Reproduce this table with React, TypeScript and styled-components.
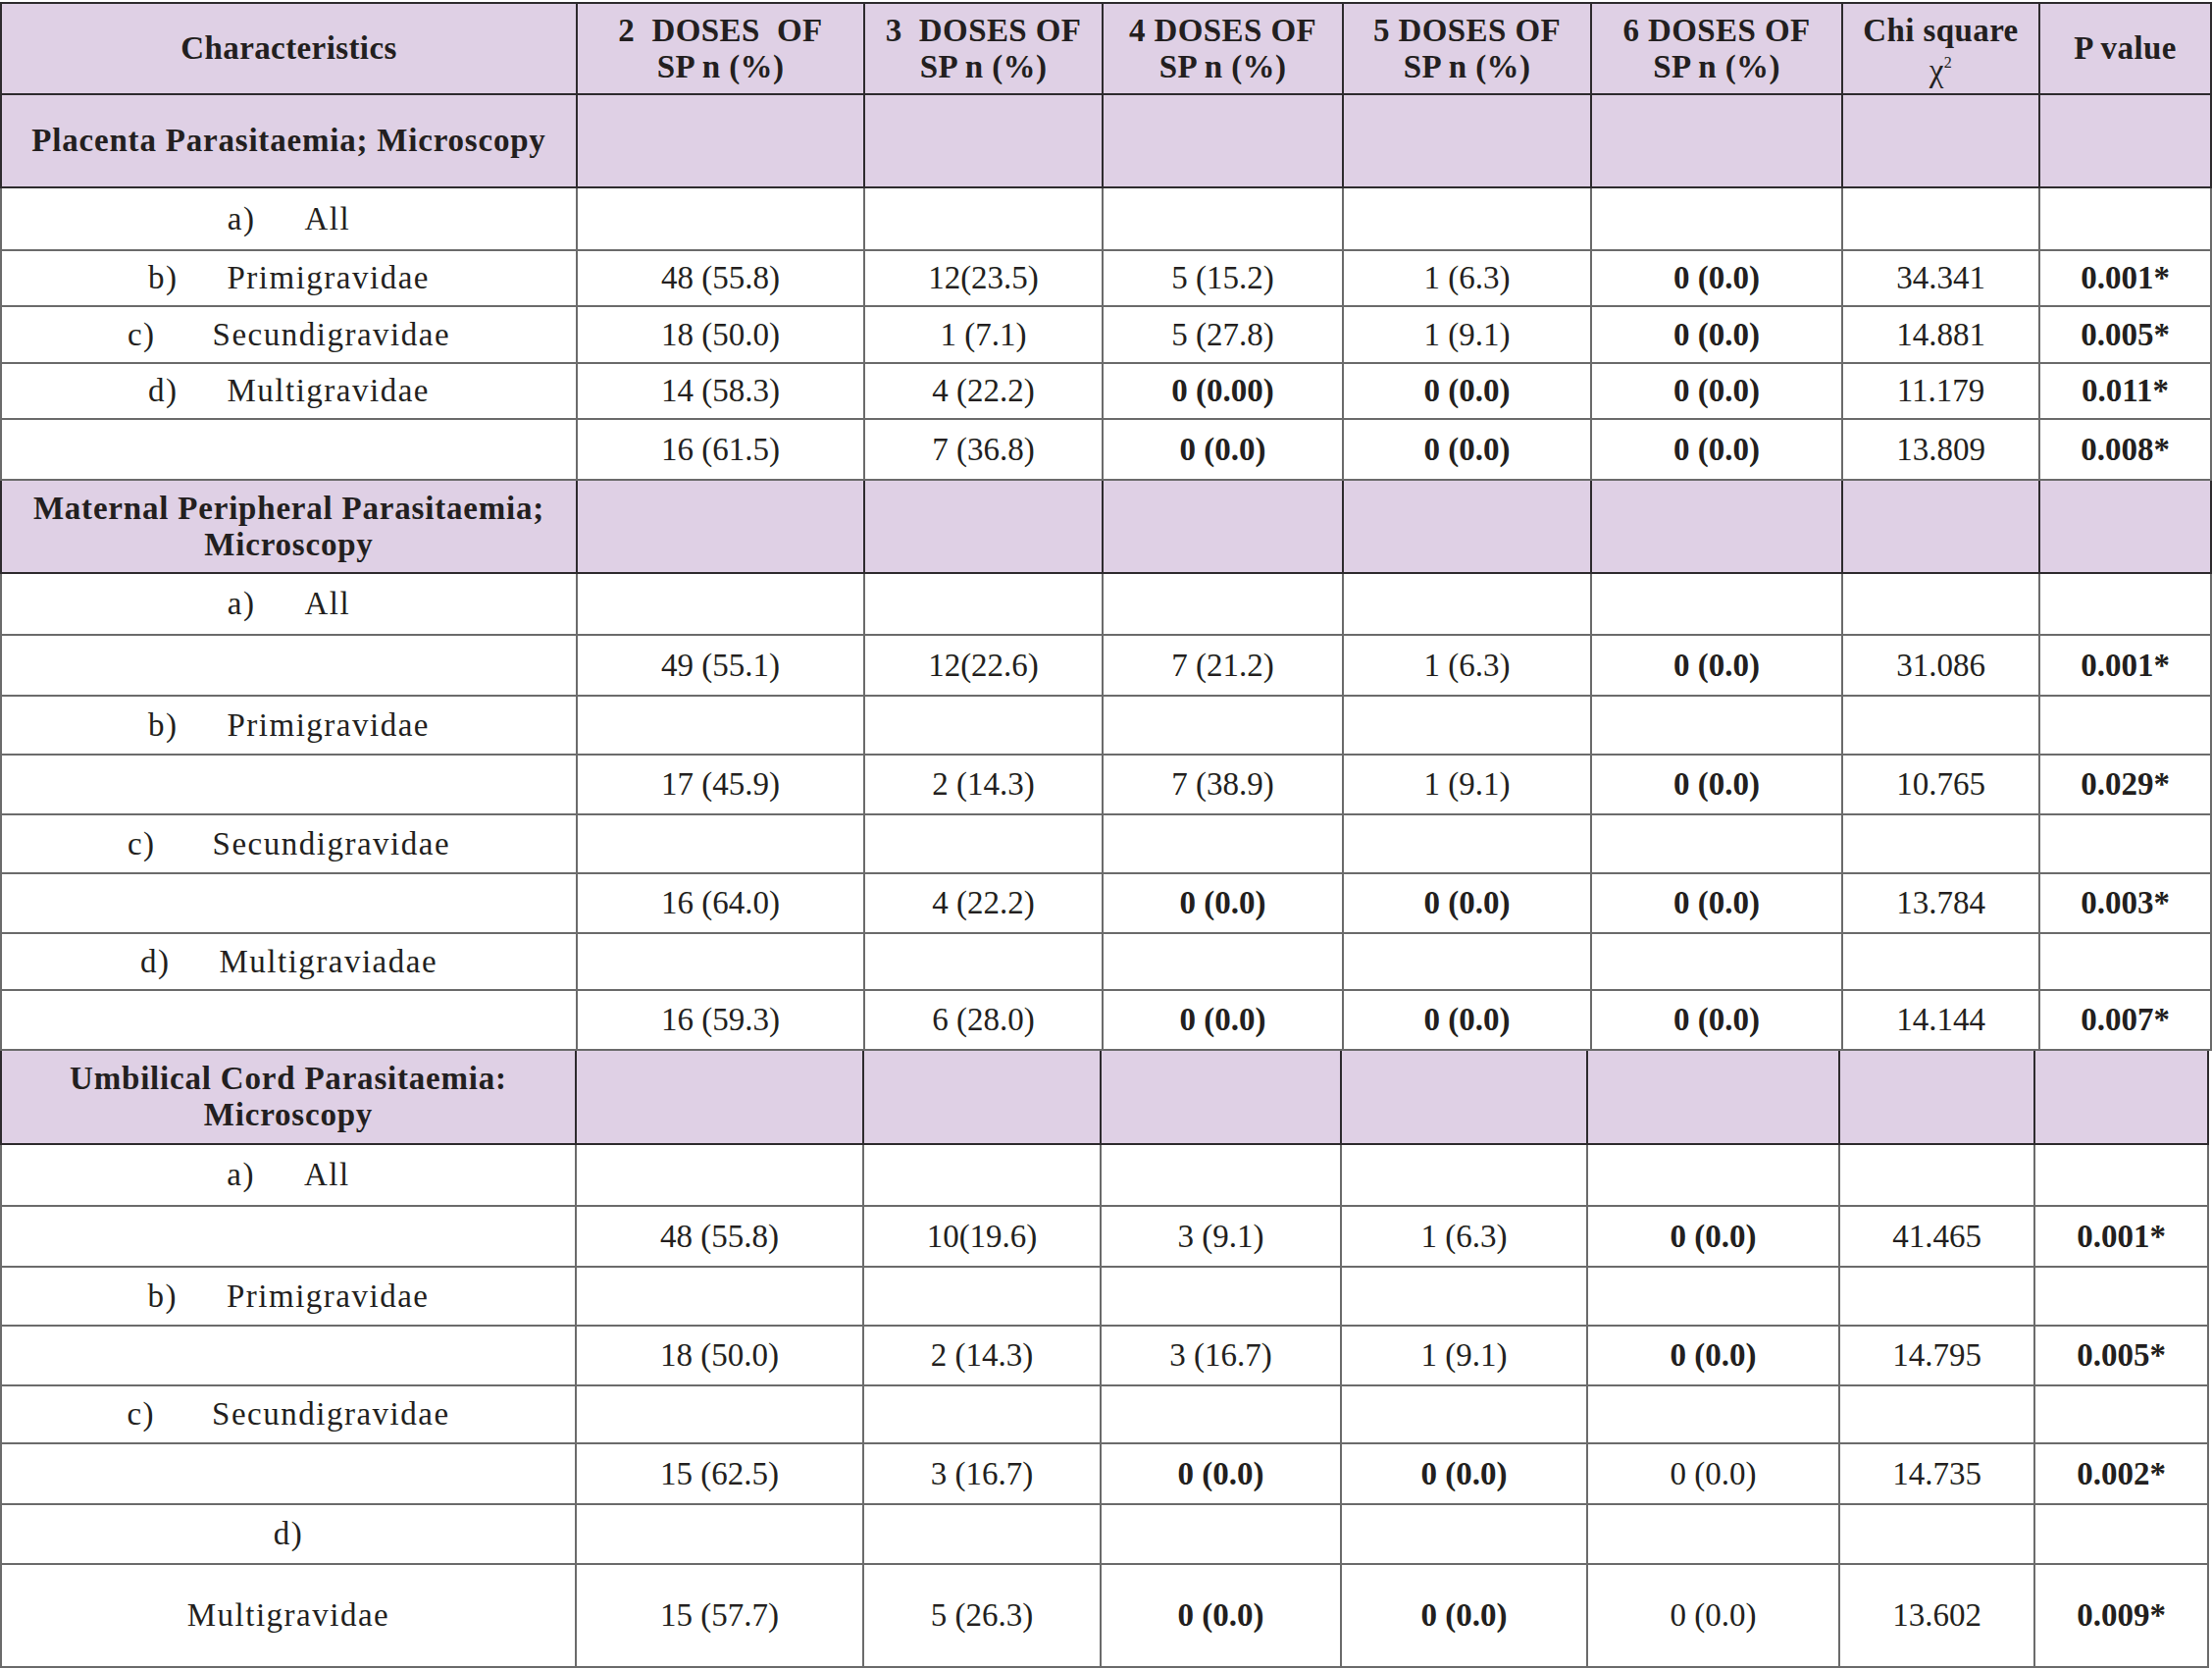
import * as React from 'react';
import styled, { createGlobalStyle, css } from 'styled-components';

const INK = '#231f20';
const LAVENDER = '#dfd0e5';

const GlobalStyle = createGlobalStyle`
  html, body {
    margin: 0;
    padding: 0;
    background: #ffffff;
  }

  body {
    font-family: 'Liberation Serif', 'Times New Roman', serif;
    color: ${INK};
  }
`;

const Page = styled.div`
  display: flex;
  flex-direction: column;
  padding-top: 2px;
  width: 2255px;
`;

const Table = styled.table<{ $first?: boolean }>`
  border-collapse: collapse;
  table-layout: fixed;
  font-size: 33px;
  line-height: 1.12;

  ${props =>
    !props.$first &&
    css`
      tr:first-child td {
        border-top: none;
      }
    `}
`;

const Row = styled.tr<{ $shade?: boolean }>`
  background: ${props => (props.$shade ? LAVENDER : '#ffffff')};
`;

const Cell = styled.td<{ $bold?: boolean; $dark?: boolean; $spacing?: number }>`
  border: 2px solid ${props => (props.$dark ? '#2e2b2e' : '#6b6b6b')};
  padding: 0 6px;
  text-align: center;
  vertical-align: middle;
  font-weight: ${props => (props.$bold ? 700 : 400)};
  letter-spacing: ${props => props.$spacing ?? 0}px;
  white-space: pre;
`;

const Marker = styled.span<{ $gap: number }>`
  display: inline-block;
  margin-right: ${props => props.$gap}px;
`;

const Sup = styled.sup`
  font-size: 16px;
  vertical-align: 14px;
  line-height: 0;
`;

const Chi = styled.span`
  display: inline-block;
  font-weight: 400;
  transform: translateY(4px);
`;

type Value = string | { b: string };

type Line =
  | { kind: 'section'; title: React.ReactNode; h: number }
  | { kind: 'row'; marker?: string; gap?: number; label?: string; values?: Value[]; h: number };

const B = (b: string) => ({ b });

const firstWidths = [587, 293, 243, 245, 253, 256, 201, 175];
const secondWidths = [586, 293, 242, 245, 251, 257, 199, 177];

const heads: React.ReactNode[] = [
  'Characteristics',
  '2  DOSES  OF\nSP n (%)',
  '3  DOSES OF\nSP n (%)',
  '4 DOSES OF\nSP n (%)',
  '5 DOSES OF\nSP n (%)',
  '6 DOSES OF\nSP n (%)',
  <>
    Chi square
    {'\n'}
    <Chi>
      χ<Sup>2</Sup>
    </Chi>
  </>,
  'P value',
];

const firstLines: Line[] = [
  { kind: 'section', title: 'Placenta Parasitaemia; Microscopy', h: 95 },
  { kind: 'row', marker: 'a)', label: 'All', h: 64 },
  {
    kind: 'row',
    marker: 'b)',
    label: 'Primigravidae',
    values: ['48 (55.8)', '12(23.5)', '5 (15.2)', '1 (6.3)', B('0 (0.0)'), '34.341', B('0.001*')],
    h: 57,
  },
  {
    kind: 'row',
    marker: 'c)',
    gap: 58,
    label: 'Secundigravidae',
    values: ['18 (50.0)', '1 (7.1)', '5 (27.8)', '1 (9.1)', B('0 (0.0)'), '14.881', B('0.005*')],
    h: 58,
  },
  {
    kind: 'row',
    marker: 'd)',
    label: 'Multigravidae',
    values: ['14 (58.3)', '4 (22.2)', B('0 (0.00)'), B('0 (0.0)'), B('0 (0.0)'), '11.179', B('0.011*')],
    h: 57,
  },
  {
    kind: 'row',
    values: ['16 (61.5)', '7 (36.8)', B('0 (0.0)'), B('0 (0.0)'), B('0 (0.0)'), '13.809', B('0.008*')],
    h: 62,
  },
  { kind: 'section', title: 'Maternal Peripheral Parasitaemia;\nMicroscopy', h: 95 },
  { kind: 'row', marker: 'a)', label: 'All', h: 63 },
  {
    kind: 'row',
    values: ['49 (55.1)', '12(22.6)', '7 (21.2)', '1 (6.3)', B('0 (0.0)'), '31.086', B('0.001*')],
    h: 62,
  },
  { kind: 'row', marker: 'b)', label: 'Primigravidae', h: 60 },
  {
    kind: 'row',
    values: ['17 (45.9)', '2 (14.3)', '7 (38.9)', '1 (9.1)', B('0 (0.0)'), '10.765', B('0.029*')],
    h: 61,
  },
  { kind: 'row', marker: 'c)', gap: 58, label: 'Secundigravidae', h: 60 },
  {
    kind: 'row',
    values: ['16 (64.0)', '4 (22.2)', B('0 (0.0)'), B('0 (0.0)'), B('0 (0.0)'), '13.784', B('0.003*')],
    h: 61,
  },
  { kind: 'row', marker: 'd)', label: 'Multigraviadae', h: 58 },
  {
    kind: 'row',
    values: ['16 (59.3)', '6 (28.0)', B('0 (0.0)'), B('0 (0.0)'), B('0 (0.0)'), '14.144', B('0.007*')],
    h: 61,
  },
];

const secondLines: Line[] = [
  { kind: 'section', title: 'Umbilical Cord Parasitaemia:\nMicroscopy', h: 95 },
  { kind: 'row', marker: 'a)', label: 'All', h: 63 },
  {
    kind: 'row',
    values: ['48 (55.8)', '10(19.6)', '3 (9.1)', '1 (6.3)', B('0 (0.0)'), '41.465', B('0.001*')],
    h: 62,
  },
  { kind: 'row', marker: 'b)', label: 'Primigravidae', h: 60 },
  {
    kind: 'row',
    values: ['18 (50.0)', '2 (14.3)', '3 (16.7)', '1 (9.1)', B('0 (0.0)'), '14.795', B('0.005*')],
    h: 61,
  },
  { kind: 'row', marker: 'c)', gap: 58, label: 'Secundigravidae', h: 59 },
  {
    kind: 'row',
    values: ['15 (62.5)', '3 (16.7)', B('0 (0.0)'), B('0 (0.0)'), '0 (0.0)', '14.735', B('0.002*')],
    h: 62,
  },
  { kind: 'row', marker: 'd)', h: 61 },
  {
    kind: 'row',
    label: 'Multigravidae',
    values: ['15 (57.7)', '5 (26.3)', B('0 (0.0)'), B('0 (0.0)'), '0 (0.0)', '13.602', B('0.009*')],
    h: 105,
  },
];

const ValueCell = ({ value }: { value?: Value }) => {
  if (value === undefined) return <Cell />;
  if (typeof value === 'string') return <Cell>{value}</Cell>;
  return <Cell $bold>{value.b}</Cell>;
};

const Body = ({ lines }: { lines: Line[] }) => (
  <tbody>
    {lines.map((line, i) => {
      if (line.kind === 'section') {
        return (
          <Row key={i} $shade style={{ height: line.h }}>
            <Cell $bold $dark $spacing={0.8}>
              {line.title}
            </Cell>
            {Array.from({ length: 7 }).map((_, j) => (
              <Cell key={j} $dark />
            ))}
          </Row>
        );
      }

      return (
        <Row key={i} style={{ height: line.h }}>
          <Cell $spacing={1.5}>
            {line.marker && (
              <Marker $gap={line.label ? line.gap ?? 50 : 0}>{line.marker}</Marker>
            )}
            {line.label}
          </Cell>
          {Array.from({ length: 7 }).map((_, j) => (
            <ValueCell key={j} value={line.values?.[j]} />
          ))}
        </Row>
      );
    })}
  </tbody>
);

const Cols = ({ widths }: { widths: number[] }) => (
  <colgroup>
    {widths.map((w, i) => (
      <col key={i} style={{ width: w }} />
    ))}
  </colgroup>
);

export default function App() {
  return (
    <>
      <GlobalStyle />
      <Page>
        <Table $first style={{ width: firstWidths.reduce((a, b) => a + b, 0) }}>
          <Cols widths={firstWidths} />
          <thead>
            <Row $shade style={{ height: 93 }}>
              {heads.map((h, i) => (
                <Cell key={i} as="th" $bold $dark $spacing={0.4}>
                  {h}
                </Cell>
              ))}
            </Row>
          </thead>
          <Body lines={firstLines} />
        </Table>
        <Table style={{ width: secondWidths.reduce((a, b) => a + b, 0) }}>
          <Cols widths={secondWidths} />
          <Body lines={secondLines} />
        </Table>
      </Page>
    </>
  );
}
